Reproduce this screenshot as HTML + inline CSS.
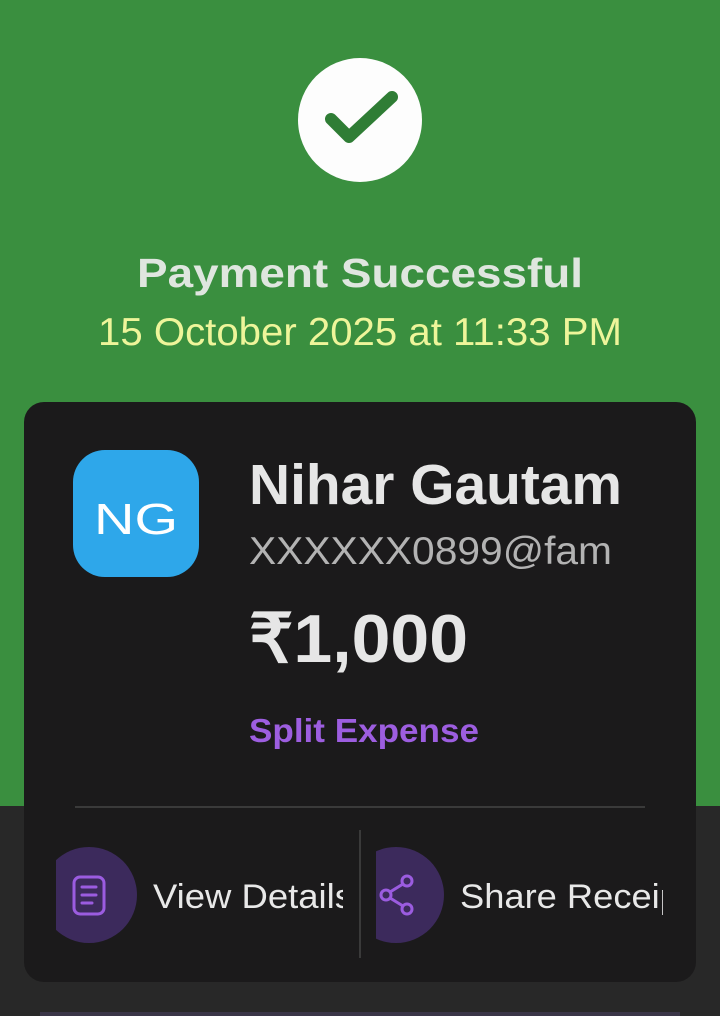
<!DOCTYPE html>
<html><head><meta charset="utf-8"><style>
html,body{margin:0;padding:0;width:720px;height:1016px;overflow:hidden;background:#282828}
svg{display:block}
text{font-family:"Liberation Sans",sans-serif}
</style></head><body>
<svg width="720" height="1016" viewBox="0 0 720 1016" xmlns="http://www.w3.org/2000/svg">
<rect x="0" y="0" width="720" height="806" fill="#3a8f3f"/>
<rect x="0" y="806" width="720" height="210" fill="#282828"/>
<rect x="40" y="1012" width="640" height="4" fill="#3a3548"/>
<circle cx="360" cy="120" r="62" fill="#fdfdfd"/>
<path d="M331 119 L349 137 L392 97" fill="none" stroke="#2f7d35" stroke-width="12" stroke-linecap="round" stroke-linejoin="round"/>
<text x="360" y="287" text-anchor="middle" font-size="41" font-weight="bold" fill="#dfe6df" textLength="446" lengthAdjust="spacingAndGlyphs">Payment Successful</text>
<text x="360" y="345" text-anchor="middle" font-size="39" fill="#eef59a" textLength="524" lengthAdjust="spacingAndGlyphs">15 October 2025 at 11:33 PM</text>
<rect x="24" y="402" width="672" height="580" rx="20" fill="#1b1a1b"/>
<rect x="73" y="450" width="126" height="127" rx="32" fill="#2ea7ea"/>
<text x="136" y="534" text-anchor="middle" font-size="44" fill="#fff" font-family="DejaVu Sans" textLength="84" lengthAdjust="spacingAndGlyphs">NG</text>
<text x="249" y="504" font-size="57" font-weight="bold" fill="#e6e6e6" textLength="373" lengthAdjust="spacingAndGlyphs">Nihar Gautam</text>
<text x="249" y="564" font-size="39" fill="#b3b3b3" textLength="363" lengthAdjust="spacingAndGlyphs">XXXXXX0899@fam</text>
<text x="249" y="662" font-size="68" font-weight="bold" fill="#e6e6e6" textLength="219" lengthAdjust="spacingAndGlyphs">₹1,000</text>
<text x="249" y="742" font-size="33" font-weight="bold" fill="#9d5ee0" textLength="230" lengthAdjust="spacingAndGlyphs">Split Expense</text>
<rect x="75" y="806" width="570" height="2" fill="#3a3a3a"/>
<rect x="359" y="830" width="2" height="128" fill="#3a3a3a"/>
<clipPath id="c1"><rect x="56" y="840" width="100" height="110"/></clipPath>
<circle cx="89" cy="895" r="48" fill="#3c2a5c" clip-path="url(#c1)"/>
<rect x="74" y="877" width="30" height="37" rx="6" fill="none" stroke="#9b5ce0" stroke-width="3"/>
<path d="M82 887 H96 M82 895 H96 M82 903 H92" stroke="#9b5ce0" stroke-width="3" stroke-linecap="round"/>
<clipPath id="t1"><rect x="150" y="860" width="193" height="70"/></clipPath>
<text x="153" y="908" font-size="34" fill="#e8e8e8" clip-path="url(#t1)" textLength="200" lengthAdjust="spacingAndGlyphs">View Details</text>
<clipPath id="c2"><rect x="376" y="840" width="100" height="110"/></clipPath>
<circle cx="396" cy="895" r="48" fill="#3c2a5c" clip-path="url(#c2)"/>
<g fill="none" stroke="#9b5ce0" stroke-width="3">
<circle cx="407" cy="881" r="5"/><circle cx="386" cy="895" r="5"/><circle cx="407" cy="909" r="5"/>
<path d="M390 892 L403 884 M390 898 L403 906"/>
</g>
<clipPath id="t2"><rect x="455" y="860" width="208" height="70"/></clipPath>
<text x="460" y="908" font-size="34" fill="#e8e8e8" clip-path="url(#t2)" textLength="230" lengthAdjust="spacingAndGlyphs">Share Receipt</text>
</svg>
</body></html>
